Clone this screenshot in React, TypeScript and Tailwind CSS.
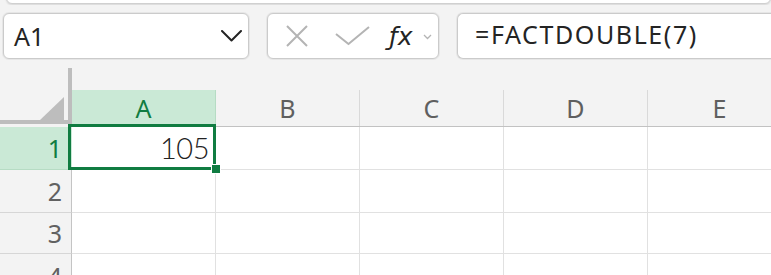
import React from "react";

const ui = { fontFamily: '"Noto Sans", "Open Sans", sans-serif' };
const cellFont = { fontFamily: 'Lato, Roboto, "Liberation Sans", sans-serif' };

const cols = ["A", "B", "C", "D", "E"];

function Chevron() {
  return (
    <svg width="21" height="12" viewBox="0 0 21 12" className="shrink-0">
      <path d="M1 1 L10.5 10.5 L20 1" fill="none" stroke="#242424" strokeWidth="2" strokeLinecap="round" strokeLinejoin="round" />
    </svg>
  );
}

export default function App() {
  return (
    <div className="w-[771px] h-[275px] overflow-hidden bg-[#f3f3f3]" style={ui}>
      {/* ribbon bottom edge */}
      <div className="h-[5px] overflow-hidden pl-[6px]">
        <div className="h-[12px] -mt-[8px] bg-white rounded-[8px] border border-[#d0d0d0] shadow-[0_1px_2px_rgba(0,0,0,0.12)]" />
      </div>

      {/* formula bar row */}
      <div className="flex items-stretch h-[46px] mt-[8px] pl-[3px]">
        <div className="w-[246px] shrink-0 flex items-center justify-between bg-white border border-[#cbcbcb] rounded-[6px] shadow-[0_0_0_1px_#e6e6e6] pl-[10px] pr-[6px]">
          <span className="text-[25px] text-[#242424] leading-none">A1</span>
          <Chevron />
        </div>
        <div className="w-[172px] shrink-0 ml-[18px] flex items-center bg-white border border-[#cbcbcb] rounded-[6px] shadow-[0_0_0_1px_#e6e6e6]">
          <svg width="24" height="22" viewBox="0 0 24 22" className="ml-[17px] shrink-0">
            <path d="M2 1 L22 21 M22 1 L2 21" stroke="#b4b4b4" strokeWidth="2" fill="none" />
          </svg>
          <svg width="36" height="20" viewBox="0 0 36 20" className="ml-[26px] shrink-0">
            <path d="M1 8 L13.5 18 L34 1" stroke="#b4b4b4" strokeWidth="2" fill="none" />
          </svg>
          <span className="ml-[18px] text-[25px] leading-none text-[#242424] italic" style={{ fontFamily: '"DejaVu Sans", sans-serif' }}>ƒx</span>
          <svg width="9" height="6" viewBox="0 0 9 6" className="ml-[10px] mt-[2px] shrink-0">
            <path d="M1 1 L4.5 4.5 L8 1" stroke="#b4b4b4" strokeWidth="1.3" fill="none" />
          </svg>
        </div>
        <div className="flex-1 ml-[18px] flex items-center bg-white border border-r-0 border-[#cbcbcb] rounded-l-[6px] shadow-[0_0_0_1px_#e6e6e6] pl-[17px]">
          <span className="text-[25px] leading-none text-[#242424] tracking-[1.6px] -mt-[3px] whitespace-nowrap">=FACTDOUBLE(7)</span>
        </div>
      </div>

      {/* grid */}
      <div className="relative flex mt-[1px]">
        {/* left: corner + row headers */}
        <div className="w-[72px] shrink-0 flex flex-col">
          <div className="h-[8px]" />
          <div className="h-[56px] flex">
            <div className="w-[68px] flex flex-col">
              <div className="h-[22px]" />
              <div className="flex-1 flex justify-end items-end pr-[4px]">
                <svg width="24" height="23" viewBox="0 0 24 23">
                  <path d="M0 23 L24 23 L24 0 Z" fill="#bdbdbd" />
                </svg>
              </div>
              <div className="h-[4px] bg-[#bdbdbd]" />
            </div>
            <div className="w-[4px] bg-[#bdbdbd]" />
          </div>
          <div className="h-[3px]" />
          <div className="h-[43px] bg-[#cae9d6] border-b border-[#b6dcc4] flex items-center justify-end pr-[10px] text-[25px] text-[#107c41] leading-none">1</div>
          <div className="h-[43px] border-b border-r border-[#d6d6d6] border-r-[#c4c4c4] flex items-center justify-end pr-[9px] text-[25px] text-[#616161] leading-none">2</div>
          <div className="h-[41px] border-b border-r border-[#d6d6d6] border-r-[#c4c4c4] flex items-center justify-end pr-[9px] text-[25px] text-[#616161] leading-none">3</div>
          <div className="h-[43px] border-r border-[#c4c4c4] flex items-start justify-end pr-[9px] pt-[10px] text-[25px] text-[#616161] leading-none">4</div>
        </div>

        {/* right: column headers + cells */}
        <div className="flex-1 flex flex-col overflow-hidden">
          <div className="h-[30px]" />
          <div className="h-[37px] flex border-b border-[#c2c2c2]">
            {cols.map((c, i) => (
              <div
                key={c}
                className={
                  i === 0
                    ? "w-[144px] shrink-0 bg-[#cae9d6] border-r border-[#b6dcc4] flex items-center justify-center text-[25px] text-[#107c41] leading-none"
                    : "w-[144px] shrink-0 border-r border-[#d9d9d9] flex items-center justify-center text-[25px] text-[#5f5f5f] leading-none"
                }
              >
                {c}
              </div>
            ))}
          </div>
          {[43, 43, 41, 43].map((h, r) => (
            <div key={r} className="flex bg-white" style={{ height: h }}>
              {cols.map((c, i) => (
                <div
                  key={c}
                  className="w-[144px] shrink-0 border-r border-b border-[#e1e1e1] flex items-center justify-end pr-[6px]"
                >
                  {r === 0 && i === 0 ? (
                    <span className="text-[29px] font-light text-[#222222] leading-none tracking-[-0.5px] -mt-[2px]" style={cellFont}>
                      105
                    </span>
                  ) : null}
                </div>
              ))}
            </div>
          ))}
        </div>

        {/* selection */}
        <div className="absolute left-[68px] top-[64px] w-[148px] h-[46px] border-[3px] border-[#107c41] pointer-events-none" />
        <div className="absolute left-[211px] top-[104px] w-[10px] h-[10px] bg-[#107c41] border border-white" />
      </div>
    </div>
  );
}
